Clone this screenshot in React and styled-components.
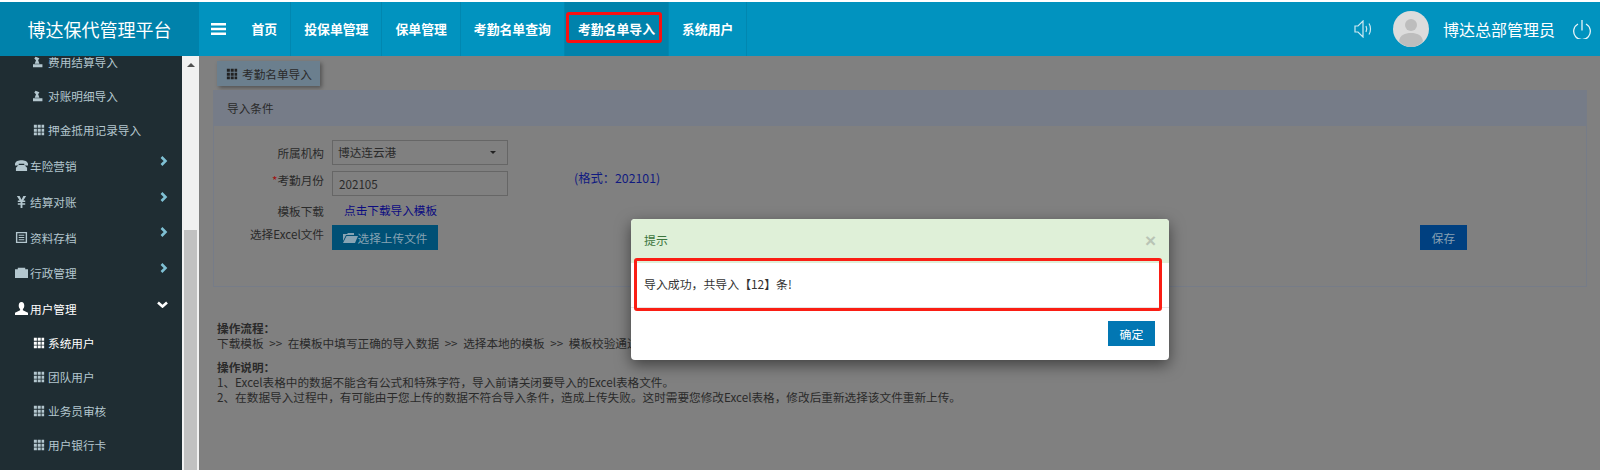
import React from 'react';
import styled, { createGlobalStyle } from 'styled-components';

const GlobalStyle = createGlobalStyle`
  html, body {
    margin: 0;
    padding: 0;
    height: 100%;
    overflow: hidden;
    background: #808080;
    font-family: "Noto Sans CJK SC", "Liberation Sans", sans-serif;
  }
  * { box-sizing: border-box; }
`;

const Page = styled.div`
  position: relative;
  width: 1600px;
  height: 470px;
  overflow: hidden;
  padding-top: 2px;
  background: #fff;
  display: flex;
  flex-direction: column;
`;

const Header = styled.header`
  flex: none;
  height: 54px;
  display: flex;
  background: #0193bf;
  color: #fff;
`;

const Brand = styled.div`
  width: 199px;
  background: #0082ab;
  font-size: 18px;
  line-height: 54px;
  text-align: center;
`;

const Toggle = styled.div`
  width: 39.5px;
  display: flex;
  align-items: center;
  justify-content: center;
`;

const NavItem = styled.div`
  position: relative;
  padding: 0 13px;
  font-size: 12.85px;
  font-weight: 700;
  line-height: 54px;
  border-right: 1px solid #0187b0;
  background: ${(p) => (p.$active ? '#0082ab' : 'transparent')};
`;

const Highlight = styled.span`
  position: absolute;
  left: 1px;
  right: 6px;
  top: 10px;
  height: 31px;
  border: 3px solid #fa1010;
  border-radius: 3px;
`;

const HeaderRight = styled.div`
  margin-left: auto;
  display: flex;
  align-items: center;
  padding-right: 9px;
`;

const Avatar = styled.svg`
  width: 36px;
  height: 36px;
  margin: 0 14px 0 20px;
`;

const UserName = styled.span`
  font-size: 16px;
  margin-right: 18px;
`;

const Body = styled.div`
  flex: 1;
  min-height: 0;
  display: flex;
`;

const Sidebar = styled.nav`
  width: 182px;
  background: #1f2d33;
  overflow: hidden;
  color: #b4c7cf;
`;

const Menu = styled.ul`
  list-style: none;
  margin: -11px 0 0;
  padding: 0;
`;

const SubItem = styled.li`
  height: 34px;
  margin-bottom: ${(p) => (p.$last ? '1px' : '0')};
  padding-left: 33px;
  display: flex;
  align-items: center;
  gap: 3px;
  font-size: 11.65px;
  line-height: 12px;
  color: ${(p) => (p.$current ? '#fff' : '#b4c7cf')};
`;

const MainItem = styled.li`
  position: relative;
  height: 35.7px;
  padding-left: 15px;
  display: flex;
  align-items: center;
  gap: 2px;
  font-size: 11.65px;
  color: ${(p) => (p.$open ? '#fff' : '#b4c7cf')};
`;

const CaretRight = styled.svg`
  position: absolute;
  right: 14px;
  top: 8px;
  width: 8px;
  height: 10px;
`;

const CaretDown = styled.svg`
  position: absolute;
  right: 14px;
  top: 10px;
  width: 11px;
  height: 7px;
`;

const Scrollbar = styled.div`
  width: 17px;
  background: #f1f1f1;
  display: flex;
  flex-direction: column;
  align-items: center;
`;

const ScrollArrow = styled.div`
  margin-top: 7px;
  width: 0;
  height: 0;
  border-left: 4px solid transparent;
  border-right: 4px solid transparent;
  border-bottom: 4px solid #505050;
`;

const ScrollThumb = styled.div`
  margin-top: 163px;
  width: 13px;
  flex: 1;
  background: #c1c1c1;
`;

const Content = styled.main`
  flex: 1;
  background: #808080;
  color: #2a2a2a;
  font-size: 11.65px;
  padding: 5px 13px 0 14px;
`;

const TabLabel = styled.div`
  width: 103px;
  height: 25px;
  margin-left: 4px;
  background: #6b7f8e;
  box-shadow: 2px 2px 4px rgba(0, 0, 0, 0.35);
  display: flex;
  align-items: center;
  gap: 4px;
  padding-left: 9px;
`;

const Panel = styled.section`
  margin-top: 4px;
  height: 197px;
  border: 1px solid #767c88;
  display: flex;
  flex-direction: column;
`;

const PanelTitle = styled.div`
  height: 35px;
  line-height: 33px;
  padding-left: 13px;
  background: #767c88;
`;

const Form = styled.div`
  position: relative;
  padding: 14px 0 0;
`;

const FormRow = styled.div`
  height: ${(p) => p.$h || 31}px;
  display: flex;
  align-items: flex-start;
  line-height: 15px;
`;

const FormLabel = styled.label`
  width: 119px;
  margin-top: ${(p) => p.$top || 0}px;
  text-align: right;
  padding-right: 9px;
  margin-right: -1px;
`;

const Required = styled.span`
  color: #a01010;
`;

const SelectBox = styled.div`
  width: 176px;
  height: 25px;
  border: 1px solid #666;
  padding: 0 5px 3px;
  display: flex;
  align-items: center;
  justify-content: space-between;
`;

const Input = styled.div`
  width: 176px;
  height: 25px;
  border: 1px solid #666;
  padding-left: 6px;
  line-height: 23px;
`;

const DownArrow = styled.span`
  margin: 2px 6px 0 0;
  border-left: 3px solid transparent;
  border-right: 3px solid transparent;
  border-top: 3px solid #222;
`;

const Hint = styled.span`
  margin-left: 66px;
  font-size: 12.3px;
  color: #101a80;
`;

const TemplateLink = styled.span`
  margin-left: 12px;
  color: #0b0b80;
`;

const UploadButton = styled.div`
  width: 106px;
  height: 25px;
  background: #005075;
  color: #87a3b3;
  display: flex;
  align-items: center;
  justify-content: center;
`;

const SaveButton = styled.div`
  position: absolute;
  top: 99px;
  right: 119px;
  width: 47px;
  height: 25px;
  background: #004080;
  color: #87a0b3;
  line-height: 25px;
  text-align: center;
`;

const Notes = styled.div`
  margin-top: 33px;
  padding-left: 4px;
  line-height: 15px;
`;

const NoteBlock = styled.p`
  margin: 0 0 9px;
`;

const FlowLine = styled.span`
  word-spacing: 3px;
`;

const Dialog = styled.div`
  position: absolute;
  left: 631px;
  top: 219px;
  width: 538px;
  height: 141px;
  background: #fff;
  border-radius: 4px;
  box-shadow: 0 5px 15px rgba(0, 0, 0, 0.5);
  color: #333;
  font-size: 11.9px;
  display: flex;
  flex-direction: column;
`;

const DialogHead = styled.div`
  height: 44px;
  padding: 0 13px 4px;
  background: #dff0d8;
  border-radius: 4px 4px 0 0;
  color: #3c763d;
  display: flex;
  align-items: center;
  justify-content: space-between;
`;

const CloseMark = styled.span`
  color: #b9c4b5;
  font-size: 19px;
  font-weight: 700;
  margin-top: 4px;
  font-family: "Liberation Sans", sans-serif;
`;

const DialogBody = styled.div`
  position: relative;
  height: 45px;
  padding: 0 13px;
  line-height: 42px;
  border-bottom: 1px solid #e5e5e5;
`;

const DialogMark = styled.span`
  position: absolute;
  left: 3px;
  right: 7px;
  top: -5px;
  height: 53px;
  border: 3px solid #fa1e14;
  border-radius: 3px;
`;

const DialogFoot = styled.div`
  flex: 1;
  display: flex;
  align-items: center;
  justify-content: flex-end;
  padding: 0 14px 1px;
`;

const OkButton = styled.div`
  width: 47px;
  height: 25px;
  background: #0277b3;
  color: #fff;
  line-height: 25px;
  text-align: center;
`;

const Glyph = ({ name, size = 12, color = 'currentColor' }) => {
  const paths = {
    pawn: 'M3 1l4.500 1.500L6 5l1.500 4H2l1.500-4L1.500 3zM0 9.500h11V13H0z',
    th: 'M1 1h3.500v3.500H1zM5.500 1H9v3.500H5.500zM10 1h3v3.500h-3zM1 5.500h3.500V9H1zM5.500 5.500H9V9H5.500zM10 5.500h3V9h-3zM1 10h3.500v3H1zM5.500 10H9v3H5.500zM10 10h3v3h-3z',
    phone: 'M0 5c1-5 13-5 14 0v2H10V5H4v2H0zM4 6.500h6l3 3V13H1V9.500z',
    yen: 'M2 1h3l2 4 2-4h3L9 6h2v1.500H8V9h3v1.500H8V14H6v-3.500H3V9h3V7.500H3V6h2z',
    list: 'M1 1h12v12H1zM2.500 2.500v9h9v-9zM4 4h6v1H4zM4 6.500h6v1H4zM4 9h6v1H4z',
    box: 'M3 2h8v1.500h3V13H0V3.500h3z',
    user: 'M7 0c2 0 3 1.500 3 4 0 1.500-.7 2.800-1.500 3.500V9l5.500 2.500V14H0v-2.500L5.500 9V7.500C4.700 6.800 4 5.500 4 4c0-2.500 1-4 3-4z',
  };
  return (
    <svg width={size} height={size} viewBox="0 0 14 14" fill={color} style={{ flex: 'none' }}>
      <path fillRule="evenodd" d={paths[name]} />
    </svg>
  );
};

const ChevronRight = () => (
  <CaretRight viewBox="0 0 8 10">
    <path d="M1.500 1l4 4-4 4" fill="none" stroke="#7fc0d4" strokeWidth="2.600" />
  </CaretRight>
);

const ChevronDown = () => (
  <CaretDown viewBox="0 0 11 7">
    <path d="M1 1.500l4.500 4 4.500-4" fill="none" stroke="#fff" strokeWidth="2.600" />
  </CaretDown>
);

const navItems = ['首页', '投保单管理', '保单管理', '考勤名单查询', '考勤名单导入', '系统用户'];

export default function App() {
  return (
    <Page>
      <GlobalStyle />
      <Header>
        <Brand>博达保代管理平台</Brand>
        <Toggle>
          <svg width="15" height="12" viewBox="0 0 15 12" fill="#fff">
            <path d="M0 0h15v2.500H0zM0 4.750h15v2.500H0zM0 9.500h15V12H0z" />
          </svg>
        </Toggle>
        {navItems.map((item) => (
          <NavItem key={item} $active={item === '考勤名单导入'}>
            {item}
            {item === '考勤名单导入' && <Highlight />}
          </NavItem>
        ))}
        <HeaderRight>
          <svg width="19" height="18" viewBox="0 0 19 18" fill="none" stroke="#cfe9f2" strokeWidth="1.200">
            <path d="M1 6h3l5-5v16l-5-5H1z" />
            <path d="M12 6c1 2 1 4 0 6M15 3.500c2 3 2 8 0 11" />
          </svg>
          <Avatar viewBox="0 0 36 36">
            <circle cx="18" cy="18" r="18" fill="#dcdcdc" />
            <circle cx="18" cy="14" r="6" fill="#bdbdbd" />
            <path d="M6 30c1-6 6-8 12-8s11 2 12 8c-3 4-8 6-12 6s-9-2-12-6z" fill="#bdbdbd" />
          </Avatar>
          <UserName>博达总部管理员</UserName>
          <svg width="18" height="19" viewBox="0 0 18 19" fill="none" stroke="#e8f5f9" strokeWidth="1.300">
            <path d="M5 4a8.300 8.300 0 1 0 8 0M9 0v10.500" />
          </svg>
        </HeaderRight>
      </Header>
      <Body>
        <Sidebar>
          <Menu>
            <SubItem><Glyph name="pawn" />费用结算导入</SubItem>
            <SubItem><Glyph name="pawn" />对账明细导入</SubItem>
            <SubItem $last><Glyph name="th" />押金抵用记录导入</SubItem>
            <MainItem><Glyph name="phone" size={13} />车险营销<ChevronRight /></MainItem>
            <MainItem><Glyph name="yen" size={13} />结算对账<ChevronRight /></MainItem>
            <MainItem><Glyph name="list" size={13} />资料存档<ChevronRight /></MainItem>
            <MainItem><Glyph name="box" size={13} />行政管理<ChevronRight /></MainItem>
            <MainItem $open><Glyph name="user" size={13} />用户管理<ChevronDown /></MainItem>
            <SubItem $current><Glyph name="th" />系统用户</SubItem>
            <SubItem><Glyph name="th" />团队用户</SubItem>
            <SubItem><Glyph name="th" />业务员审核</SubItem>
            <SubItem><Glyph name="th" />用户银行卡</SubItem>
          </Menu>
        </Sidebar>
        <Scrollbar>
          <ScrollArrow />
          <ScrollThumb />
        </Scrollbar>
        <Content>
          <TabLabel><Glyph name="th" color="#222" />考勤名单导入</TabLabel>
          <Panel>
            <PanelTitle>导入条件</PanelTitle>
            <Form>
              <FormRow>
                <FormLabel $top={5}>所属机构</FormLabel>
                <SelectBox>博达连云港<DownArrow /></SelectBox>
              </FormRow>
              <FormRow>
                <FormLabel $top={1}><Required>*</Required>考勤月份</FormLabel>
                <Input>202105</Input>
                <Hint>(格式：202101)</Hint>
              </FormRow>
              <FormRow $h={23}>
                <FormLabel $top={1}>模板下载</FormLabel>
                <TemplateLink>点击下载导入模板</TemplateLink>
              </FormRow>
              <FormRow>
                <FormLabel $top={1}>选择Excel文件</FormLabel>
                <UploadButton>
                  <svg width="15" height="12" viewBox="0 0 15 12" fill="#87a3b3">
                    <path d="M0 2h4l1-1h6v2H3L0 9zM3.500 4H15l-3 7H0z" />
                  </svg>
                  选择上传文件
                </UploadButton>
              </FormRow>
              <SaveButton>保存</SaveButton>
            </Form>
          </Panel>
          <Notes>
            <NoteBlock>
              <b>操作流程：</b><br />
              <FlowLine>下载模板 &gt;&gt; 在模板中填写正确的导入数据 &gt;&gt; 选择本地的模板 &gt;&gt; 模板校验通过</FlowLine>
            </NoteBlock>
            <NoteBlock>
              <b>操作说明：</b><br />
              1、Excel表格中的数据不能含有公式和特殊字符，导入前请关闭要导入的Excel表格文件。<br />
              2、在数据导入过程中，有可能由于您上传的数据不符合导入条件，造成上传失败。这时需要您修改Excel表格，修改后重新选择该文件重新上传。
            </NoteBlock>
          </Notes>
        </Content>
      </Body>
      <Dialog>
        <DialogHead>提示<CloseMark>×</CloseMark></DialogHead>
        <DialogBody>
          导入成功，共导入【12】条!
          <DialogMark />
        </DialogBody>
        <DialogFoot><OkButton>确定</OkButton></DialogFoot>
      </Dialog>
    </Page>
  );
}
